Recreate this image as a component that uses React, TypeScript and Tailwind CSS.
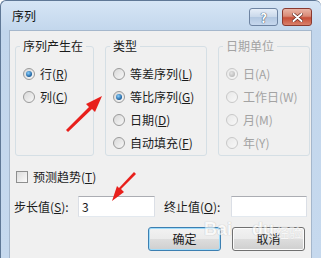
import type { ReactNode } from 'react'

const FONT = "font-['Microsoft_YaHei','Noto_Sans_CJK_SC','Noto_Sans',sans-serif]"

function Radio({ checked = false, disabled = false }: { checked?: boolean; disabled?: boolean }) {
  return (
    <span
      className={`relative flex h-[12px] w-[12px] shrink-0 items-center justify-center rounded-full border ${
        disabled
          ? 'border-[#c8c8c8] bg-[linear-gradient(135deg,#e8e8e8,#f8f8f8)]'
          : 'border-[#9a9a9a] bg-[linear-gradient(135deg,#d8d8d8,#f8f8f8)]'
      }`}
    >
      {checked && (
        <span
          className={`h-[6px] w-[6px] rounded-full ${
            disabled
              ? 'bg-[radial-gradient(circle_at_40%_35%,#e4e4e4,#acacac)]'
              : 'bg-[radial-gradient(circle_at_40%_35%,#8ad0ff,#1a5e9c_70%)]'
          }`}
        />
      )}
    </span>
  )
}

function Option({ label, checked, disabled }: { label: ReactNode; checked?: boolean; disabled?: boolean }) {
  return (
    <div className={`flex h-[23px] items-center gap-[5px] whitespace-nowrap ${disabled ? 'text-[#a3a3a3]' : 'text-[#1b1b1b]'}`}>
      <Radio checked={checked} disabled={disabled} />
      <span className="leading-none">{label}</span>
    </div>
  )
}

function Group({ title, width, disabled, children }: { title: string; width: string; disabled?: boolean; children: ReactNode }) {
  return (
    <fieldset className={`h-[118px] ${width} shrink-0 rounded-[3px] border border-[#d5dfe5] px-[7px]`}>
      <legend
        className={`ml-[-3px] whitespace-nowrap px-[3px] text-[12px] leading-[16px] ${disabled ? 'text-[#a3a3a3]' : 'text-[#1b1b1b]'}`}
      >
        {title}
      </legend>
      <div className="pt-[8px]">{children}</div>
    </fieldset>
  )
}

export default function App() {
  return (
    <div className={`relative h-[258px] w-[321px] overflow-hidden bg-white ${FONT} text-[12px]`}>
      <div className="flex h-full flex-col rounded-t-[6px] border-t border-l border-[#5f7896] bg-[linear-gradient(180deg,#d6e5f5_0%,#c2d6ec_30px,#c6d9ee_100%)]">
        {/* Title bar */}
        <div className="flex h-[29px] shrink-0 items-center pl-[11px] pr-[9px]">
          <span className="text-[12px] text-[#111]">序列</span>
          <div className="ml-auto flex items-center gap-[4px] pt-[3px]">
            <div className="flex h-[18px] w-[29px] items-center justify-center rounded-[3px] border border-[#6e84a2] bg-[linear-gradient(180deg,#e6eef8_0%,#c9d8ea_50%,#b2c7e0_51%,#c7d8ee_100%)]">
              <span className="text-[13px] font-bold leading-none text-white [text-shadow:0_0_1px_#30405a,0_0_1px_#30405a]">?</span>
            </div>
            <div className="flex h-[18px] w-[30px] items-center justify-center rounded-[3px] border border-[#8a3a30] bg-[linear-gradient(180deg,#eab5a6_0%,#d98a76_45%,#c74e37_55%,#d8806a_100%)]">
              <svg width="11" height="9" viewBox="0 0 11 9">
                <path d="M1.5 1 L9.5 8 M9.5 1 L1.5 8" stroke="#5a2018" strokeWidth="3.2" strokeLinecap="round" />
                <path d="M1.5 1 L9.5 8 M9.5 1 L1.5 8" stroke="#fff" strokeWidth="2" strokeLinecap="round" />
              </svg>
            </div>
          </div>
        </div>

        {/* Client area */}
        <div className="ml-[8px] mr-[9px] flex-1 border-t border-l border-r border-[#a5b7cc] bg-[#f0f0f0] text-[#1b1b1b]">
          <div className="flex gap-[11px] pl-[5px] pt-[7px]">
            <Group title="序列产生在" width="w-[75px]">
              <Option checked label={<>行(<u>R</u>)</>} />
              <Option label={<>列(<u>C</u>)</>} />
            </Group>
            <Group title="类型" width="w-[102px]">
              <Option label={<>等差序列(<u>L</u>)</>} />
              <Option checked label={<>等比序列(<u>G</u>)</>} />
              <Option label={<>日期(<u>D</u>)</>} />
              <Option label={<>自动填充(<u>F</u>)</>} />
            </Group>
            <Group title="日期单位" width="w-[92px]" disabled>
              <Option checked disabled label="日(A)" />
              <Option disabled label="工作日(W)" />
              <Option disabled label="月(M)" />
              <Option disabled label="年(Y)" />
            </Group>
          </div>

          {/* Trend checkbox */}
          <div className="mt-[13px] flex h-[16px] items-center gap-[5px] pl-[6px]">
            <span className="h-[12px] w-[12px] border border-[#8e8f8f] bg-[linear-gradient(135deg,#dcdcdc,#fbfbfb)]" />
            <span className="leading-none">预测趋势(<u>T</u>)</span>
          </div>

          {/* Step / stop values */}
          <div className="mt-[11px] flex h-[21px] items-center pl-[4px]">
            <span className="w-[64px] whitespace-nowrap leading-none">步长值(<u>S</u>):</span>
            <div className="flex h-[21px] w-[77px] items-center border border-[#abadb3] border-b-[#e3e9ef] border-x-[#dbdfe6] bg-white pl-[3px] text-[12px]">
              3
            </div>
            <span className="ml-[9px] w-[67px] whitespace-nowrap leading-none">终止值(<u>O</u>):</span>
            <div className="h-[21px] w-[76px] border border-[#abadb3] border-b-[#e3e9ef] border-x-[#dbdfe6] bg-white" />
          </div>

          {/* Buttons */}
          <div className="mt-[10px] flex justify-end gap-[11px] pr-[6px]">
            <div className="flex h-[24px] w-[73px] items-center justify-center rounded-[3px] border border-[#3c7fb1] bg-[linear-gradient(180deg,#f2f2f2_0%,#ebebeb_50%,#dddddd_51%,#cfcfcf_100%)] shadow-[inset_0_0_0_1px_#9fdcfb]">
              确定
            </div>
            <div className="flex h-[24px] w-[73px] items-center justify-center rounded-[3px] border border-[#707070] bg-[linear-gradient(180deg,#f2f2f2_0%,#ebebeb_50%,#dddddd_51%,#cfcfcf_100%)] shadow-[inset_0_0_0_1px_#fcfcfc]">
              取消
            </div>
          </div>
        </div>
      </div>

      {/* Red annotation arrows */}
      <svg className="pointer-events-none absolute left-0 top-0" width="321" height="258" viewBox="0 0 321 258">
        <path d="M66 130 L89 107 L86 104 L102 96 L95 112 L92 109 L68 132 Z" fill="#e8201c" />
        <path d="M136 174 L121 189 L124 192 L112 201 L117 186 L119 188 L134 172 Z" fill="#e8201c" />
      </svg>

      {/* Watermark */}
      <div className="pointer-events-none absolute left-[204px] top-[220px] flex items-end gap-[2px] opacity-60">
        <span className="font-['Liberation_Sans',sans-serif] text-[18px] font-bold leading-none text-white [text-shadow:0_0_1px_#b0b0b0,0_0_1px_#b0b0b0]">Bai</span>
        <span className="ml-[18px] font-['Liberation_Sans',sans-serif] text-[18px] font-bold leading-none text-white [text-shadow:0_0_1px_#b0b0b0,0_0_1px_#b0b0b0]">du</span>
        <span className="text-[13px] leading-none text-white [text-shadow:0_0_1px_#b0b0b0]">经验</span>
      </div>
    </div>
  )
}
